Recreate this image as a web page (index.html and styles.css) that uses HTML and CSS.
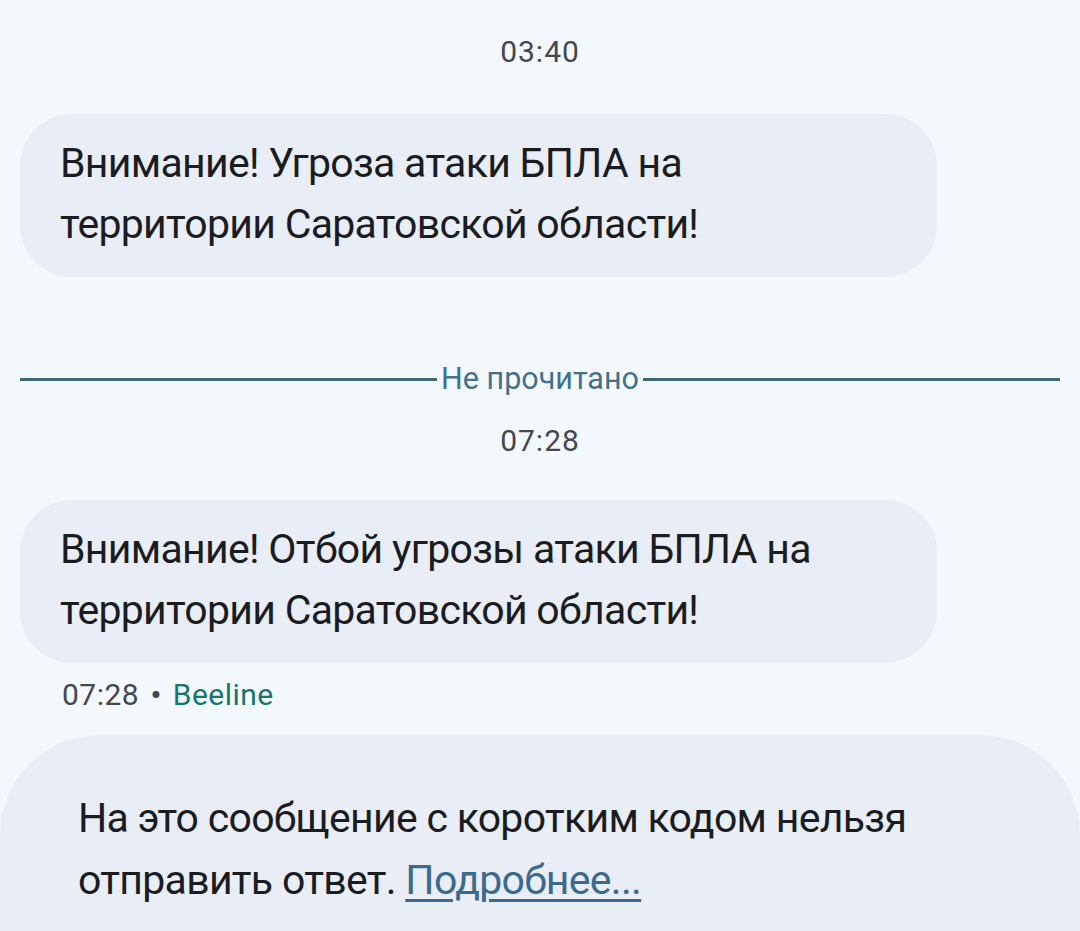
FILE: index.html
```html
<!DOCTYPE html>
<html lang="ru">
<head>
<meta charset="utf-8">
<title>Сообщения</title>
<link rel="stylesheet" href="styles.css">
</head>
<body>
<main class="thread">
  <div class="stamp stamp-first">03:40</div>
  <div class="bubble">
    <p class="bubble-text">Внимание! Угроза атаки БПЛА на территории Саратовской области!</p>
  </div>
  <div class="divider">
    <span class="divider-line"></span>
    <span class="divider-label">Не прочитано</span>
    <span class="divider-line"></span>
  </div>
  <div class="stamp stamp-second">07:28</div>
  <div class="bubble">
    <p class="bubble-text">Внимание! Отбой угрозы атаки БПЛА на территории Саратовской области!</p>
  </div>
  <div class="meta"><span class="meta-time">07:28</span><span class="meta-dot">•</span><span class="meta-sim">Beeline</span></div>
</main>
<footer class="notice">
  <p class="notice-text">На это сообщение с коротким кодом нельзя отправить ответ. <a class="notice-link" href="#">Подробнее...</a></p>
</footer>
</body>
</html>
```
FILE: styles.css
```css
html, body {
  margin: 0;
  padding: 0;
}
body {
  background: #f3f8fc;
  font-family: Roboto, "Noto Sans", sans-serif;
  color: #1b1c1f;
  width: 1080px;
  height: 931px;
  overflow: hidden;
  display: flex;
  flex-direction: column;
}
.thread {
  display: flex;
  flex-direction: column;
  padding: 0 20px;
}
.stamp {
  text-align: center;
  font-size: 30px;
  line-height: 36px;
  letter-spacing: 1px;
  color: #44474e;
}
.stamp-first {
  margin-top: 34px;
  margin-bottom: 44px;
}
.stamp-second {
  margin-top: 26px;
  margin-bottom: 41px;
}
.bubble {
  align-self: flex-start;
  width: 917px;
  box-sizing: border-box;
  background: #e8edf6;
  border-radius: 52px;
  padding: 19px 40px 22px 40px;
}
.bubble-text {
  margin: 0;
  font-size: 41px;
  line-height: 61px;
  letter-spacing: -0.7px;
}
.divider {
  display: flex;
  align-items: center;
  gap: 4px;
  margin-top: 84px;
}
.divider-line {
  flex: 1;
  height: 3px;
  background: #3e6878;
}
.divider-label {
  font-size: 30.5px;
  line-height: 36px;
  color: #43708a;
}
.meta {
  margin: 14px 0 0 42px;
  font-size: 30px;
  line-height: 36px;
  display: flex;
  align-items: center;
  gap: 11px;
}
.meta-time {
  color: #44474e;
  letter-spacing: 0.5px;
}
.meta-dot {
  color: #44474e;
  font-size: 34px;
}
.meta-sim {
  color: #17766c;
  letter-spacing: 0.5px;
}
.notice {
  margin-top: 22px;
  flex: 1;
  background: #e8edf6;
  border-radius: 100px 100px 0 0;
  padding: 52px 60px 0 78px;
}
.notice-text {
  margin: 0;
  font-size: 41px;
  line-height: 62px;
  letter-spacing: -0.7px;
}
.notice-link {
  color: #3b6a8c;
  text-decoration: underline;
  text-decoration-thickness: 3px;
  text-underline-offset: 5px;
}
```
